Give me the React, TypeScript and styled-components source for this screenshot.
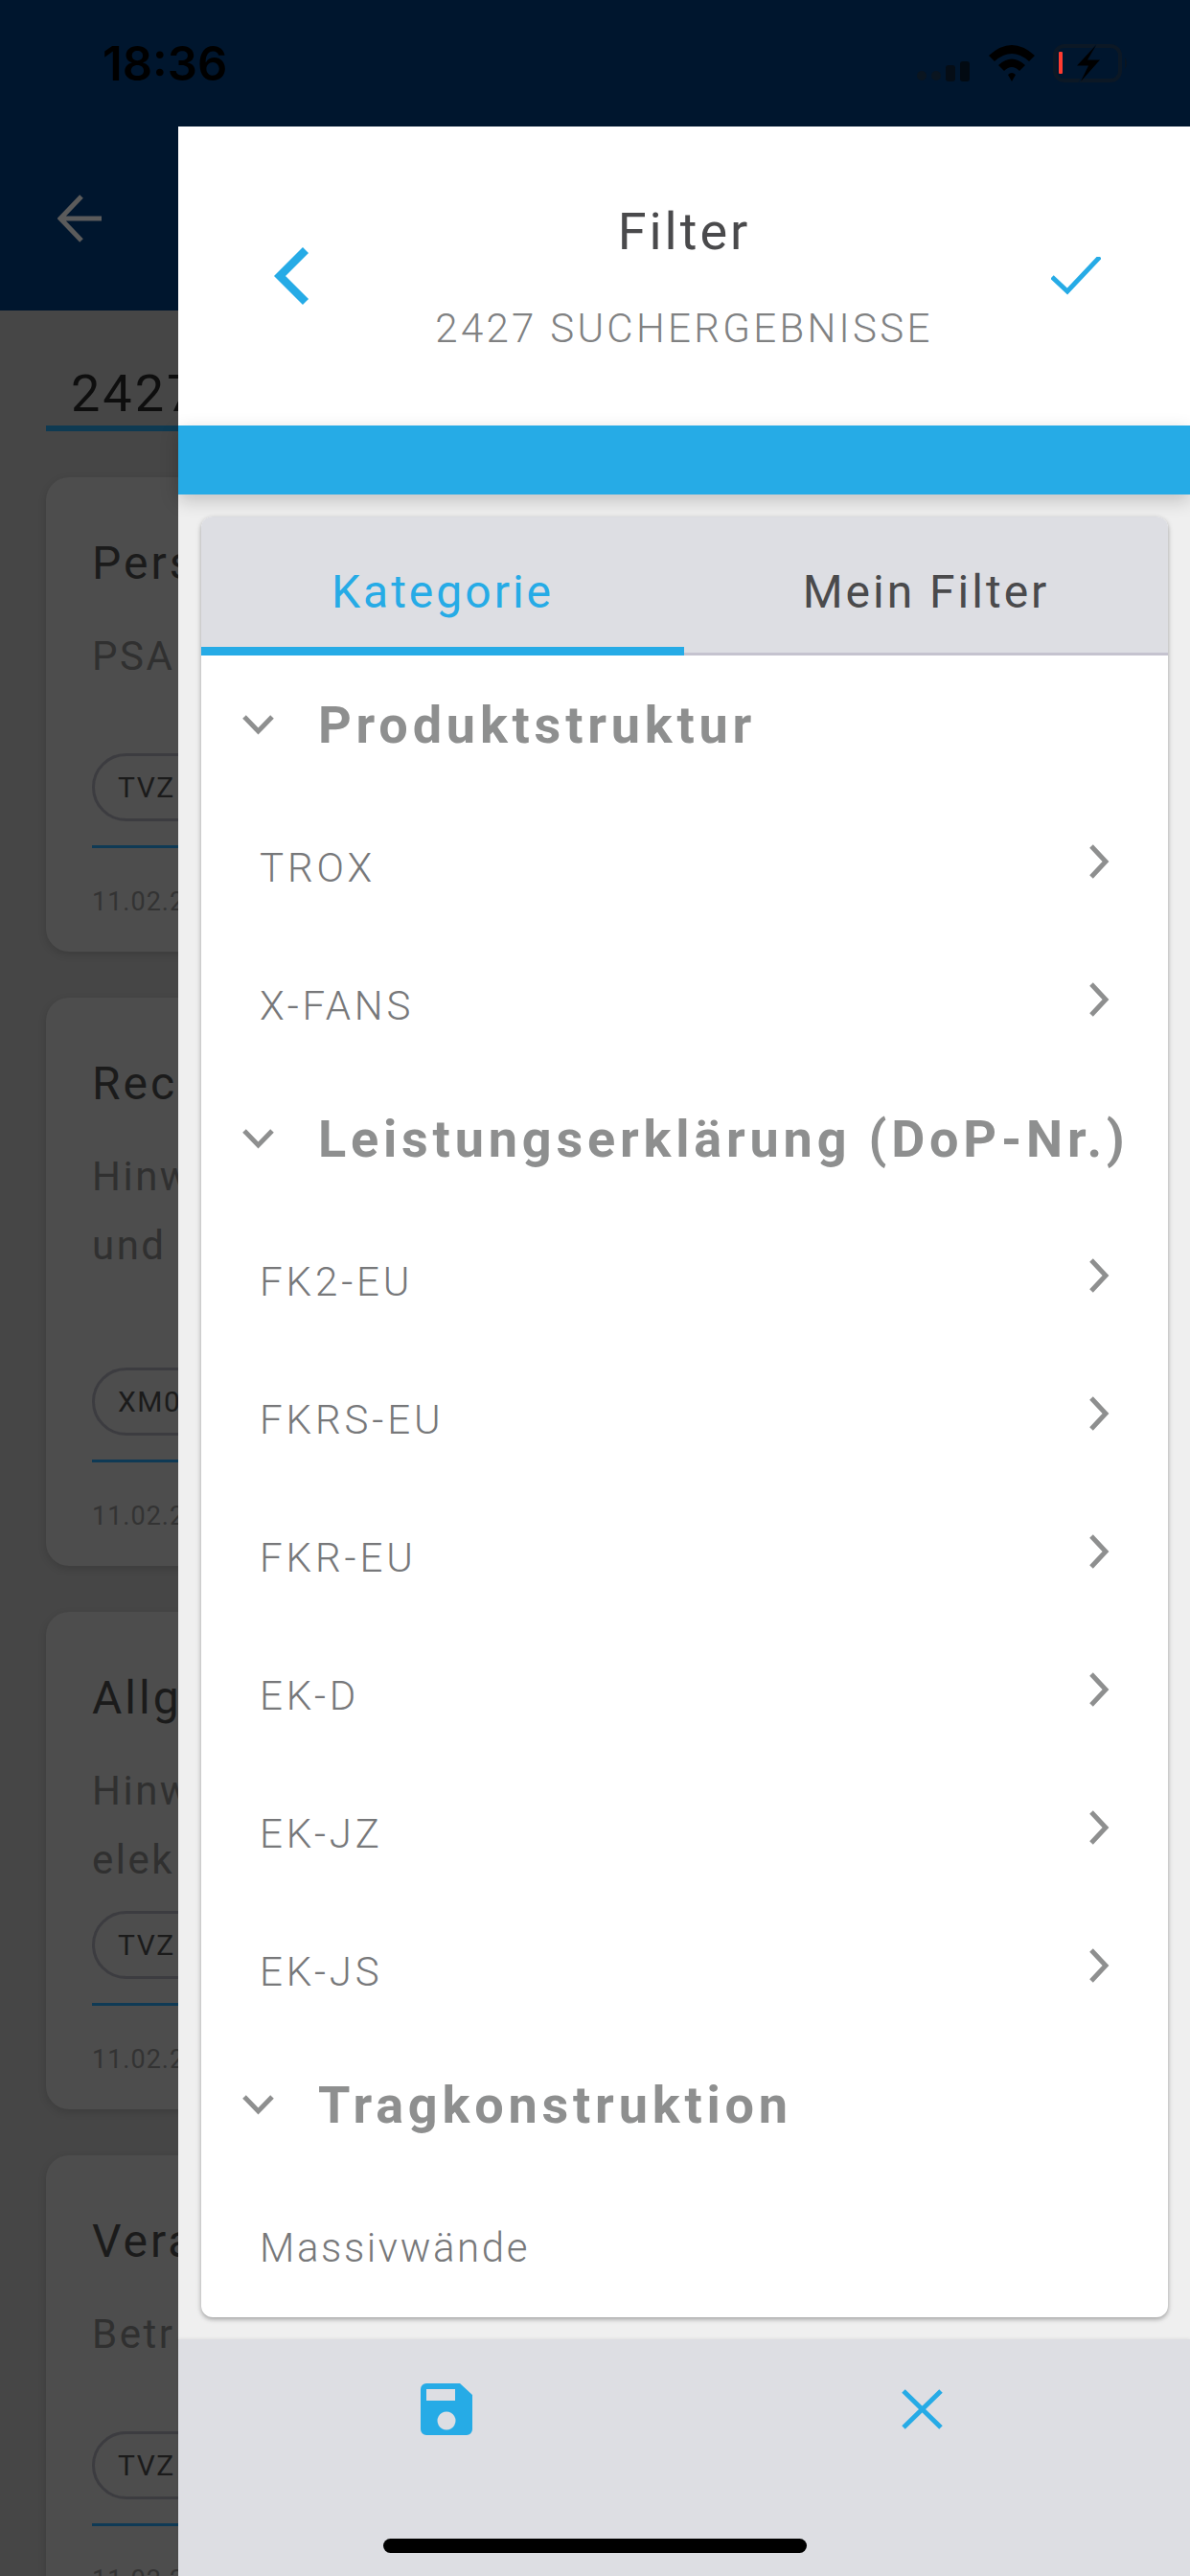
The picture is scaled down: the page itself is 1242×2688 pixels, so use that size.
import React from "react";
import styled, { createGlobalStyle } from "styled-components";

const Global = createGlobalStyle`
  html, body { margin: 0; padding: 0; background: #464646; }
  * { box-sizing: border-box; }
`;

const Screen = styled.div`
  position: relative;
  width: 1242px;
  height: 2688px;
  overflow: hidden;
  background: #464646;
  font-family: Roboto, "Liberation Sans", sans-serif;
`;

const TopBar = styled.header`
  height: 324px;
  background: #00162e;
  display: flex;
  flex-direction: column;
`;

const StatusRow = styled.div`
  height: 132px;
  padding: 0 64px 0 107px;
  display: flex;
  align-items: center;
  justify-content: space-between;
`;

const Time = styled.span`
  font-family: Inter, Roboto, sans-serif;
  font-size: 49px;
  font-weight: 600;
  color: #000;
`;

const StatusIcons = styled.svg`
  width: 221px;
  height: 40px;
`;

const BackButton = styled.svg`
  width: 48px;
  height: 50px;
  margin: 71px 0 0 60px;
`;

const Main = styled.main`
  padding: 0 0 0 48px;
`;

const CountBlock = styled.div`
  width: 300px;
  height: 126px;
  padding: 57px 0 0 26px;
  margin-bottom: 48px;
  border-bottom: 6px solid #0e3a52;
  font-size: 54px;
  line-height: 60px;
  letter-spacing: 3px;
  color: #0e0e0e;
`;

const ResultCard = styled.article`
  width: 1100px;
  margin-bottom: 48px;
  padding: 60px 0 0 48px;
  border-radius: 24px;
  background: #4d4d4d;
  box-shadow: 0 3px 8px rgba(0, 0, 0, 0.14);
`;

const CardTitle = styled.h3`
  margin: 0 0 31px;
  font-size: 48px;
  line-height: 60px;
  font-weight: 400;
  letter-spacing: 3px;
  color: #1b1b1b;
`;

const CardLine = styled.p`
  margin: 0;
  font-size: 42px;
  line-height: 72px;
  letter-spacing: 2.5px;
  color: #303030;
`;

const Pill = styled.span<{ $top: number }>`
  display: block;
  width: 300px;
  height: 71px;
  margin-top: ${(p) => p.$top}px;
  padding-left: 24px;
  border: 3px solid #3c3c40;
  border-radius: 36px;
  font-size: 30px;
  line-height: 65px;
  letter-spacing: 1.5px;
  color: #1b1b1b;
`;

const CardRule = styled.div`
  height: 3px;
  margin-top: 25px;
  background: #0f3a55;
`;

const CardDate = styled.time`
  display: block;
  height: 108px;
  padding-top: 38px;
  font-size: 27px;
  line-height: 36px;
  letter-spacing: 1px;
  color: #333;
`;

const Drawer = styled.aside`
  position: absolute;
  top: 132px;
  left: 186px;
  right: 0;
  bottom: 0;
  display: flex;
  flex-direction: column;
  background: #efefef;
`;

const DrawerHead = styled.div`
  height: 312px;
  flex: none;
  display: grid;
  grid-template-columns: 100px 1fr 100px;
  align-items: center;
  padding: 0 93px;
  background: #fff;
`;

const HeadBack = styled.svg`
  width: 38px;
  height: 60px;
  margin-left: 7px;
`;

const HeadCheck = styled.svg`
  width: 52px;
  height: 40px;
  justify-self: end;
`;

const HeadText = styled.div`
  display: flex;
  flex-direction: column;
  align-items: center;
  margin-top: 2px;
  white-space: nowrap;
`;

const HeadTitle = styled.h1`
  margin: 0 0 44px;
  font-size: 54px;
  line-height: 64px;
  font-weight: 400;
  letter-spacing: 3px;
  color: #4a4a4c;
`;

const HeadSub = styled.div`
  font-size: 42px;
  line-height: 50px;
  font-weight: 300;
  letter-spacing: 3.3px;
  color: #808182;
`;

const BlueBand = styled.div`
  height: 72px;
  flex: none;
  background: #26abe6;
  box-shadow: 0 6px 18px rgba(0, 0, 0, 0.2);
  position: relative;
`;

const Body = styled.div`
  flex: 1;
  min-height: 0;
  padding: 23px 23px 23px 24px;
`;

const Panel = styled.section`
  height: 100%;
  background: #fff;
  border-radius: 12px;
  overflow: hidden;
  box-shadow: 0 2px 5px rgba(0, 0, 0, 0.35);
`;

const Tabs = styled.nav`
  height: 145px;
  display: grid;
  grid-template-columns: 504px 1fr;
  background: #dddee3;
`;

const Tab = styled.div<{ $active?: boolean }>`
  display: flex;
  align-items: center;
  justify-content: center;
  padding-top: ${(p) => (p.$active ? "20px" : "14px")};
  font-size: 48px;
  letter-spacing: 3px;
  color: ${(p) => (p.$active ? "#26abe6" : "#4a4a4c")};
  border-bottom: ${(p) => (p.$active ? "9px solid #26abe6" : "3px solid #c5c3cf")};
`;

const Section = styled.div`
  & + & {
    margin-top: -4px;
  }
`;

const SectionHead = styled.div`
  height: 144px;
  margin-bottom: 4px;
  display: flex;
  align-items: center;
  gap: 45px;
  padding-left: 42px;
  font-size: 54px;
  font-weight: 700;
  letter-spacing: 4.8px;
  white-space: nowrap;
  color: #8e8f8f;
`;

const Row = styled.div<{ $tight?: boolean }>`
  height: 144px;
  display: flex;
  align-items: center;
  justify-content: space-between;
  padding: 3px 61px 0;
  font-size: 42px;
  font-weight: 300;
  letter-spacing: ${(p) => (p.$tight ? "2.6px" : "3.9px")};
  color: #77787a;
`;

const RowChevron = styled.svg`
  width: 22px;
  height: 36px;
  margin-bottom: 13px;
`;

const DownChevron = styled.svg`
  width: 35px;
  height: 22px;
  flex: none;
`;

const Footer = styled.footer`
  position: relative;
  height: 247px;
  flex: none;
  display: grid;
  grid-template-columns: 496px 1fr;
  background: #dddee3;
  box-shadow: 0 -1px 3px rgba(0, 0, 0, 0.06);
`;

const FooterSlot = styled.div<{ $left: number; $top: number }>`
  padding: ${(p) => p.$top}px 0 0 ${(p) => p.$left}px;
`;

const HomeBar = styled.div`
  position: absolute;
  left: 214px;
  top: 208px;
  width: 442px;
  height: 15px;
  border-radius: 8px;
  background: #000;
`;

const Blue = "#26abe6";
const sections = [
  { title: "Produktstruktur", rows: ["TROX", "X-FANS"] },
  { title: "Leistungserklärung (DoP-Nr.)", rows: ["FK2-EU", "FKRS-EU", "FKR-EU", "EK-D", "EK-JZ", "EK-JS"] },
  { title: "Tragkonstruktion", rows: ["Massivwände"], noArrow: true },
];

const cards = [
  { title: "Pers", lines: ["PSA"], pill: "TVZ", top: 65 },
  { title: "Rec", lines: ["Hinw", "und"], pill: "XM0", top: 91 },
  { title: "Allg", lines: ["Hinw", "elek"], pill: "TVZ", top: 17 },
  { title: "Vera", lines: ["Betr"], pill: "TVZ", top: 65 },
];

export default function App() {
  return (
    <Screen>
      <Global />
      <TopBar>
        <StatusRow>
          <Time>18:36</Time>
          <StatusIcons viewBox="0 0 221 40">
            <circle cx="5" cy="33" r="5" fill="#0a1520" />
            <circle cx="20" cy="33" r="5" fill="#0a1520" />
            <rect x="30" y="22" width="10" height="17" rx="3" fill="#050d16" />
            <rect x="45" y="18" width="10" height="21" rx="3" fill="#020a12" />
            <path d="M75 12 Q99 -10 123 12 L117 18 Q99 2 81 18 Z M85 22 Q99 9 113 22 L107 28 Q99 20 91 28 Z M95 32 Q99 28 103 32 L99 39 Z" fill="#000" />
            <rect x="144" y="2" width="68" height="36" rx="10" fill="none" stroke="#0c1825" strokeWidth="4" />
            <path d="M217 14 Q221 20 217 26 Z" fill="#0a1520" />
            <rect x="148" y="8" width="4" height="23" rx="1" fill="#ff3b30" />
            <path d="M188 -1 L164 24 L177 24 L168 41 L193 15 L180 15 Z" fill="#00162e" />
            <path d="M187 1 L167 22.500 L179 22.500 L171 39 L191 16.500 L178 16.500 Z" fill="#000" />
          </StatusIcons>
        </StatusRow>
        <BackButton viewBox="0 0 48 50">
          <path d="M46 25 H4 M25 2 L3 25 L25 48" fill="none" stroke="#5b5b5b" strokeWidth="5" />
        </BackButton>
      </TopBar>

      <Main>
        <CountBlock>2427</CountBlock>
        {cards.map((c, i) => (
          <ResultCard key={i}>
            <CardTitle>{c.title}</CardTitle>
            {c.lines.map((l) => (
              <CardLine key={l}>{l}</CardLine>
            ))}
            <Pill $top={c.top}>{c.pill}</Pill>
            <CardRule />
            <CardDate>11.02.2</CardDate>
          </ResultCard>
        ))}
      </Main>

      <Drawer>
        <DrawerHead>
          <HeadBack viewBox="0 0 38 60">
            <path d="M33 3 L6 30 L33 57" fill="none" stroke={Blue} strokeWidth="8.5" />
          </HeadBack>
          <HeadText>
            <HeadTitle>Filter</HeadTitle>
            <HeadSub>2427 SUCHERGEBNISSE</HeadSub>
          </HeadText>
          <HeadCheck viewBox="0 0 52 40">
            <path d="M1 21 L17 36 L51 0" fill="none" stroke={Blue} strokeWidth="5" />
          </HeadCheck>
        </DrawerHead>
        <BlueBand />
        <Body>
          <Panel>
            <Tabs>
              <Tab $active>Kategorie</Tab>
              <Tab>Mein Filter</Tab>
            </Tabs>
            {sections.map((s) => (
              <Section key={s.title}>
                <SectionHead>
                  <DownChevron viewBox="0 0 35 22">
                    <path d="M3 3 L17.500 18 L32 3" fill="none" stroke="#8e8f8f" strokeWidth="5" />
                  </DownChevron>
                  {s.title}
                </SectionHead>
                {s.rows.map((r) => (
                  <Row key={r} $tight={s.noArrow}>
                    {r}
                    {!s.noArrow && (
                      <RowChevron viewBox="0 0 22 36">
                        <path d="M3 2 L18 18 L3 34" fill="none" stroke="#8e8f8f" strokeWidth="5" />
                      </RowChevron>
                    )}
                  </Row>
                ))}
              </Section>
            ))}
          </Panel>
        </Body>
        <Footer>
          <FooterSlot $left={253} $top={46}>
            <svg width="54" height="54" viewBox="0 0 54 54">
              <path
                fillRule="evenodd"
                d="M6 0 H41 L54 12 V48 a6 6 0 0 1 -6 6 H6 a6 6 0 0 1 -6 -6 V6 a6 6 0 0 1 6 -6 Z M6 6 V18 H36 V6 Z M27 29.500 a9.500 9.500 0 1 0 0.010 0 Z"
                fill={Blue}
              />
            </svg>
          </FooterSlot>
          <FooterSlot $left={259} $top={52}>
            <svg width="43" height="42" viewBox="0 0 43 42">
              <path d="M2 2 L41 40 M41 2 L2 40" fill="none" stroke={Blue} strokeWidth="5" />
            </svg>
          </FooterSlot>
          <HomeBar />
        </Footer>
      </Drawer>
    </Screen>
  );
}
